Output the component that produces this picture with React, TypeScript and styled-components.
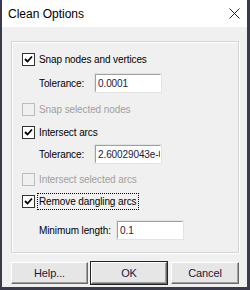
import React from "react";
import styled, { createGlobalStyle } from "styled-components";

const GlobalStyle = createGlobalStyle`
  html, body {
    margin: 0;
    padding: 0;
    background: #3a3a4a;
    width: 250px;
    height: 290px;
    overflow: hidden;
  }
`;

const Window = styled.div`
  margin-left: 2px;
  width: 245px;
  height: 287px;
  background: #f0f0f0;
  display: flex;
  flex-direction: column;
  font-family: "Liberation Sans", Arial, sans-serif;
  font-size: 10px;
  letter-spacing: -0.1px;
  color: #000;
`;

const TitleBar = styled.div`
  height: 27px;
  background: #fff;
  display: flex;
  align-items: center;
  justify-content: space-between;
  padding: 0 7px 0 6px;
`;

const Title = styled.span`
  font-family: "Liberation Sans", Arial, sans-serif;
  font-size: 12px;
  letter-spacing: 0;
`;

const Content = styled.div`
  padding: 14px 8px 0 9px;
  display: flex;
  flex-direction: column;
`;

const Group = styled.div`
  height: 210px;
  border: 1px solid #d5d5d5;
  box-shadow: inset 1px 1px 0 #fff, 1px 1px 0 #fff;
  padding: 0 0 0 10px;
  display: flex;
  flex-direction: column;
`;

const CheckRow = styled.label<{ $mt: number; $disabled?: boolean }>`
  margin-top: ${(p) => p.$mt}px;
  height: 13px;
  display: flex;
  align-items: center;
  gap: 3px;
  color: ${(p) => (p.$disabled ? "#a0a0a0" : "#000")};
`;

const Box = styled.span<{ $disabled?: boolean }>`
  width: 11px;
  height: 11px;
  border: 1px solid ${(p) => (p.$disabled ? "#bcbcbc" : "#333")};
  background: ${(p) => (p.$disabled ? "#f0f0f0" : "#fff")};
  display: flex;
  align-items: center;
  justify-content: center;
  flex: none;
`;

const CheckText = styled.span<{ $focus?: boolean }>`
  padding: 1px 1px;
  border: 1px dotted ${(p) => (p.$focus ? "#000" : "transparent")};
  line-height: 13px;
  margin-left: -1px;
  white-space: nowrap;
`;

const FieldRow = styled.div<{ $mt: number }>`
  margin-top: ${(p) => p.$mt}px;
  height: 20px;
  display: flex;
  align-items: center;
  padding-left: 17px;
`;

const FieldLabel = styled.span<{ $w: number }>`
  width: ${(p) => p.$w}px;
  flex: none;
  white-space: nowrap;
`;

const Input = styled.div`
  height: 16px;
  background: #fff;
  border-top: 2px solid #a0a0a0;
  border-left: 2px solid #a0a0a0;
  border-bottom: 2px solid #fff;
  border-right: 2px solid #fff;
  outline: 1px solid #e3e3e3;
  outline-offset: -1px;
  padding-left: 2px;
  display: flex;
  align-items: center;
  overflow: hidden;
  white-space: nowrap;
  box-sizing: content-box;
  width: 62px;
  color: #1a1a40;
`;

const Buttons = styled.div`
  display: flex;
  margin-top: 9px;
`;

const Button = styled.div<{ $w: number; $ml: number; $default?: boolean }>`
  width: ${(p) => p.$w}px;
  margin-left: ${(p) => p.$ml}px;
  height: 22px;
  box-sizing: border-box;
  background: #e6e6e6;
  border-top: 1px solid #fff;
  border-left: 1px solid #fff;
  border-right: 1px solid #696969;
  border-bottom: 1px solid #696969;
  box-shadow: inset -1px -1px 0 #a0a0a0;
  outline: ${(p) => (p.$default ? "1px solid #222" : "none")};
  outline-offset: 0;
  display: flex;
  align-items: center;
  justify-content: center;
  font-size: 11px;
  color: #1a1a3a;
`;

const Check = () => (
  <svg width="9" height="9" viewBox="0 0 9 9">
    <path d="M1 4 L3.5 6.5 L8 1.5" stroke="#000" strokeWidth="1.8" fill="none" />
  </svg>
);

const CloseIcon = () => (
  <svg width="11" height="11" viewBox="0 0 11 11">
    <path d="M0.5 0.5 L10.5 10.5 M10.5 0.5 L0.5 10.5" stroke="#222" strokeWidth="1" />
  </svg>
);

export default function App() {
  return (
    <>
      <GlobalStyle />
      <Window>
        <TitleBar>
          <Title>Clean Options</Title>
          <CloseIcon />
        </TitleBar>
        <Content>
          <Group>
            <CheckRow $mt={11}>
              <Box><Check /></Box>
              <CheckText>Snap nodes and vertices</CheckText>
            </CheckRow>
            <FieldRow $mt={7}>
              <FieldLabel $w={55}>Tolerance:</FieldLabel>
              <Input>0.0001</Input>
            </FieldRow>
            <CheckRow $mt={10} $disabled>
              <Box $disabled />
              <CheckText>Snap selected nodes</CheckText>
            </CheckRow>
            <CheckRow $mt={10}>
              <Box><Check /></Box>
              <CheckText>Intersect arcs</CheckText>
            </CheckRow>
            <FieldRow $mt={5}>
              <FieldLabel $w={55}>Tolerance:</FieldLabel>
              <Input>2.60029043e-005</Input>
            </FieldRow>
            <CheckRow $mt={9} $disabled>
              <Box $disabled />
              <CheckText>Intersect selected arcs</CheckText>
            </CheckRow>
            <CheckRow $mt={9}>
              <Box><Check /></Box>
              <CheckText $focus>Remove dangling arcs</CheckText>
            </CheckRow>
            <FieldRow $mt={12}>
              <FieldLabel $w={77}>Minimum length:</FieldLabel>
              <Input>0.1</Input>
            </FieldRow>
          </Group>
          <Buttons>
            <Button $w={77} $ml={0}>Help...</Button>
            <Button $w={76} $ml={3} $default>OK</Button>
            <Button $w={68} $ml={4}>Cancel</Button>
          </Buttons>
        </Content>
      </Window>
    </>
  );
}
